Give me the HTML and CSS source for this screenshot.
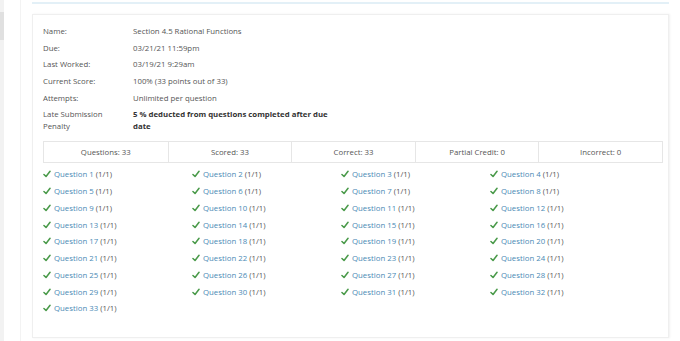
FILE: index.html
```html
<!DOCTYPE html>
<html lang="en">
<head>
    <meta charset="UTF-8">
    <title>Section 4.5 Rational Functions</title>
    <link rel="stylesheet" href="styles.css">
</head>
<body>
    <div class="page">
        <div class="side-strip"><div class="side-handle"></div></div>
        <div class="main">
            <div class="top-rule"></div>
            <div class="card">
                <table class="info">
                    <tr><td class="label">Name:</td><td>Section 4.5 Rational Functions</td></tr>
                    <tr><td class="label">Due:</td><td>03/21/21 11:59pm</td></tr>
                    <tr><td class="label">Last Worked:</td><td>03/19/21 9:29am</td></tr>
                    <tr><td class="label">Current Score:</td><td>100% (33 points out of 33)</td></tr>
                    <tr><td class="label">Attempts:</td><td>Unlimited per question</td></tr>
                    <tr><td class="label">Late Submission Penalty</td><td class="strong">5 % deducted from questions completed after due date</td></tr>
                </table>

                <div class="summary">
                    <div class="summary-cell">Questions: 33</div>
                    <div class="summary-cell">Scored: 33</div>
                    <div class="summary-cell">Correct: 33</div>
                    <div class="summary-cell">Partial Credit: 0</div>
                    <div class="summary-cell">Incorrect: 0</div>
                </div>

                <div class="questions" id="questions"></div>
            </div>
        </div>
    </div>

    <script>
        // Build the question list
        const list = document.getElementById('questions');
        for (let i = 1; i <= 33; i++) {
            const item = document.createElement('div');
            item.className = 'question';
            item.innerHTML = '<svg class="check" viewBox="0 0 10 10"><path d="M1.2 5.6 L3.8 8.2 L8.8 1.6" fill="none" stroke="#4a9a4a" stroke-width="1.9" stroke-linecap="round" stroke-linejoin="round"/></svg>' +
                '<a href="#">Question ' + i + '</a> <span class="score">(1/1)</span>';
            list.appendChild(item);
        }
    </script>
</body>
</html>
```

FILE: styles.css
```css
body {
    margin: 0;
    background-color: #fff;
    font-family: 'Open Sans', 'Liberation Sans', sans-serif;
    font-size: 7.8px;
    color: #555;
}

.page {
    display: flex;
    height: 341px;
    overflow: hidden;
}

.side-strip {
    width: 4px;
    background-color: #f2f2f2;
    padding-top: 12px;
}

.side-handle {
    height: 28px;
    background-color: #e0e0e0;
}

.main {
    flex: 1;
    margin-left: 16px;
    border-left: 1px solid #f3f3f3;
    padding: 2px 11px 0 11px;
}

.top-rule {
    height: 2px;
    background-color: #e3f0f7;
    margin-bottom: 10px;
}

.card {
    border: 1px solid #efefef;
    box-shadow: 1px 0 2px rgba(0, 0, 0, 0.06);
    padding: 8px 5px 22px 10px;
    height: 292px;
}

.info {
    border-collapse: collapse;
    table-layout: fixed;
    width: 295px;
    margin-bottom: 9px;
}

.info td {
    padding: 0;
    vertical-align: top;
    line-height: 12px;
    height: 16.7px;
    box-sizing: border-box;
    padding-top: 2px;
}

.info .label {
    width: 90px;
    padding-right: 24px;
}

.info .strong {
    font-weight: bold;
    color: #333;
}

.summary {
    display: grid;
    grid-template-columns: repeat(5, 1fr);
    border: 1px solid #e6e6e6;
    margin-bottom: 3px;
}

.summary-cell {
    text-align: center;
    padding: 4px 0;
    line-height: 12px;
    border-left: 1px solid #e6e6e6;
}

.summary-cell:first-child {
    border-left: none;
}

.questions {
    display: grid;
    grid-template-columns: repeat(4, 149px);
}

.question {
    height: 16.75px;
    line-height: 16.75px;
    white-space: nowrap;
}

.check {
    width: 8px;
    height: 8px;
    margin-right: 3px;
    vertical-align: -1px;
}

.question a {
    color: #4a8ab5;
    text-decoration: none;
}
```
